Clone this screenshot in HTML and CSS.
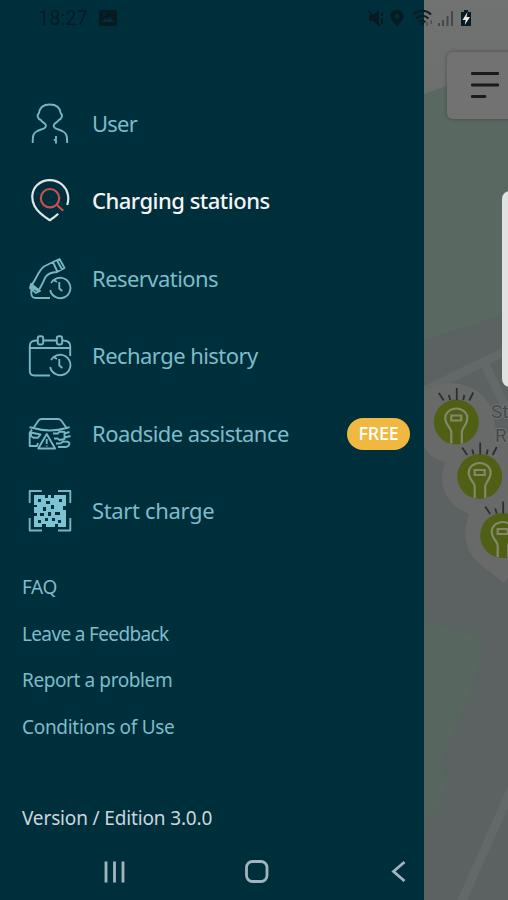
FILE: index.html
```html
<!DOCTYPE html>
<html lang="en">
<head>
    <meta charset="UTF-8">
    <title>Charging stations</title>
    <link rel="stylesheet" href="styles.css">
</head>
<body>
    <div class="screen">
        <div class="drawer">
            <nav class="menu">
                <a class="menu-item user">
                    <svg class="icon" viewBox="0 0 44 44">
                        <path d="M4.700 41c0-7 .3-10 4.600-12l6.700-2.700c2.500-1.200 2.500-3.300.5-5C14.500 20 13.500 19.500 12.800 18c-2.500-.5-4.500-5-2-6.500C11.500 5.500 15.500 2.500 21.800 2.500s10.300 3 11 9c2.500 1.500.5 6-2 6.500-.7 1.500-1.700 2-3.700 3.300-2 1.700-2 3.800.5 5l6.700 2.700c4.300 2 4.900 5 4.900 12"/>
                        <path d="M28 34v3l-1.500 1H28v3.500"/>
                    </svg>
                    <span>User</span>
                </a>
                <a class="menu-item stations active">
                    <svg class="icon" viewBox="0 0 44 44">
                        <path d="M39.200 26C41.500 19 40 11 34.500 6 27-.7 16-.5 9.200 6 3.500 11.500 3 20 6.500 27c3 5.700 8.500 10 15.300 14.200 3.500-2.200 6-4.200 8.400-6.500"/>
                        <g class="accent"><circle cx="22" cy="19.200" r="9.200"/><path d="M28.800 25.700l6.400 6"/></g>
                    </svg>
                    <span>Charging stations</span>
                </a>
                <a class="menu-item reservations">
                    <svg class="icon" viewBox="0 0 44 44">
                        <path d="M3.500 28C8 23 10 14 16 9.500L25 5l6.500-3 5 9-7.500 4c-5 .5-9 1-11.500 5-2 4-4 9-6.500 12.500M25 5l4.500 10M29 3.500l5 9"/>
                        <path d="M3 27l9 7-4 2-6-5zM5 27.500v6M2 29l8 5M3.500 33c-1 5 .5 8 4 8H22"/>
                        <path d="M25.500 23.300a10.200 10.200 0 1 1-3.300 9.700M23 26l2.500-3 3.500 2M31.300 25v6.500l3 2.500"/>
                    </svg>
                    <span>Reservations</span>
                </a>
                <a class="menu-item history">
                    <svg class="icon" viewBox="0 0 44 44">
                        <path d="M9.500 6.500C4 6.500 1.800 8 1.800 12v25c0 3 1.700 4.500 4.500 4.500H22M15.500 6.500h13M34.500 6.500c5.500 0 7.700 1.500 7.700 5.500v10M2 14h40"/>
                        <rect x="9.800" y="2.300" width="5.400" height="8.200" rx="2"/>
                        <rect x="28.800" y="2.300" width="5.400" height="8.200" rx="2"/>
                        <path d="M25.500 23.300a10.200 10.200 0 1 1-3.300 9.700M23 26l2.500-3 3.500 2M31.300 25v6.500l3 2.500"/>
                    </svg>
                    <span>Recharge history</span>
                </a>
                <a class="menu-item roadside">
                    <svg class="icon" viewBox="0 0 44 44">
                        <path d="M5.500 16l5-7.500c.8-1.200 2-1.500 3.500-1.500h15.500c1.800 0 3 .5 3.800 1.500L38.500 16c-10 3-23 3-33 0zM5.500 16l-4-.8M38.500 16l3.200-.8M4 17.500l-2.300 3.300V34H9l1-3"/>
                        <path d="M3 20.500l9.500 2-2.500 3.300H5.500L3 24zM18.700 22l-8.400 14.500h16.800zM18.700 27v5M18.700 33.500v1"/>
                        <path d="M25 21.500h5l1.500-2 5 .5v7l-5 1-2-1.500H26M36.500 21.500l5-1.500M36.500 25.500l6-1.500M28 31.500h4c2 0 2-2.500 4-2l4 .3c3 1 .5 5.200-2 5.200h-8"/>
                    </svg>
                    <span>Roadside assistance</span>
                    <span class="badge">FREE</span>
                </a>
                <a class="menu-item start">
                    <svg class="icon" viewBox="0 0 44 44">
                        <path d="M1.700 14V2h12M30 2h12.300v12M42.300 29v12.500H30M14 41.500H1.700V29"/>
                        <path class="solid" fill-rule="evenodd" d="M6 6h11v3h3V6h3v3h3V6h12v11h-3v4h3v17h-8v-3h-3v3h-9v-3h-4v3H6V27h3v-3H6v-6h3v-2H6zM10 10v3h3v-3zM31 10v3h3v-3zM10 31v3h3v-3zM18 12v3h4v-3zM23 16v4h3v-4zM15 18v4h3v-4zM20 23v4h3v-4zM12 24v3h4v-3zM27 23v3h5v-3zM24 29v3h3v-3zM17 29v3h3v-3zM30 31v3h3v-3z"/>
                    </svg>
                    <span>Start charge</span>
                </a>
            </nav>
            <nav class="links">
                <a class="faq">FAQ</a>
                <a class="feedback">Leave a Feedback</a>
                <a class="report">Report a problem</a>
                <a class="conditions">Conditions of Use</a>
            </nav>
            <div class="version">Version / Edition 3.0.0</div>
            <div class="navbar">
                <svg viewBox="0 0 28 28"><path d="M6 3.500v21M14.500 3.500v21M23 3.500v21"/></svg>
                <svg viewBox="0 0 28 28"><rect x="3.500" y="3.500" width="20.500" height="20" rx="6"/></svg>
                <svg viewBox="0 0 28 28"><path d="M19.500 4L8.500 13.500l11 9.500"/></svg>
            </div>
        </div>
        <div class="map">
            <svg class="map-art" viewBox="0 0 84 900">
                <defs>
                    <g id="station">
                        <circle class="station-dot" r="22.500"/>
                        <path class="station-bulb" d="M-5 21.500V10c0-4-6-7-6-14a11 9.500 0 0 1 22 0C11 3 5.500 6 5.500 10v11.500M-5-6.500H5v5H-5z"/>
                        <path class="station-rays" d="M-17.500-29l5 7.500M-7.500-27l1.500 5M.5-34v12M8-27l-1 5M17-29.500l-4 8"/>
                    </g>
                </defs>
                <path class="park" d="M0 94l84-30v249L0 340z"/>
                <path class="road" d="M-4 393l88-43M60 362l24 50"/>
                <path class="park low" d="M0 620l60 20-10 43-33 80 8 17-13 33-12 10z"/>
                <path class="road" d="M88 788L36 905"/>
                <path class="halo" d="M0 392c20-16 54-10 66 14 4 8 5 17 4 25 25-2 30 18 30 30v100L80 583 58 566c-12-9-19-23-16-40l3-12c-16-6-26-18-27-34 0-8 1-12 3-18C11 459 4 455 0 447z"/>
                <g class="place"><text x="67" y="418">St</text><text x="71" y="442">R</text></g>
                <use href="#station" x="32.300" y="422"/>
                <use href="#station" x="55.700" y="476.500"/>
                <use href="#station" x="78.700" y="535.500"/>
            </svg>
            <div class="filter">
                <svg viewBox="0 0 28 28"><path d="M1 2.500h26M1 14h26M1 25.500h13"/></svg>
            </div>
            <div class="side-panel"></div>
        </div>
        <div class="statusbar">
            <span class="clock">18:27</span>
            <svg class="picture" viewBox="0 0 18 16"><path fill-rule="evenodd" d="M2 0h14a2 2 0 0 1 2 2v12a2 2 0 0 1-2 2H2a2 2 0 0 1-2-2V2a2 2 0 0 1 2-2zM3 12h12l-4-5-3 3-2-2zM4 3v2h2V3z"/></svg>
            <svg class="tray" viewBox="0 0 106 20">
                <path d="M1 7h4l6-5v16l-6-5H1zM1 2l12 15-1 1L0 3z"/>
                <path d="M13 5h2v3h-2zM13 10h2v6h-2z"/>
                <path fill-rule="evenodd" d="M29 2c4 0 6.500 2.700 6.500 6 0 4-6.500 10-6.500 10s-6.500-6-6.500-10c0-3.300 2.500-6 6.500-6zm0 4a2.300 2.300 0 1 0 0 4.600A2.300 2.300 0 0 0 29 6z"/>
                <path class="wave" d="M45.500 6.500c5-5 12.500-5 17.500 0M48 10.500c4-3.500 8.500-3.500 12.500 0M51 14c2.500-2 4-2 6.500 0"/>
                <path d="M52 15h4.500l-2.200 3z"/>
                <path class="faint" d="M58.500 14H60v4h-1.500zM62.500 12H64v4h-1.500z"/>
                <path class="bars" d="M71 18v-3M75 18v-6M79.500 18V8M84 18V3"/>
                <path d="M93 4h3V2h4v2h3v14H93z"/>
                <path class="bolt" d="M99.500 4l-5 8h3.200l-1 5 5.300-8h-3.500z"/>
            </svg>
        </div>
    </div>
</body>
</html>
```
FILE: styles.css
```css
body { margin: 0; font-family: "Noto Sans", "Open Sans", sans-serif; background-color: #5c6161; }
.screen { position: relative; display: flex; width: 508px; height: 900px; overflow: hidden; }

/* drawer */
.drawer { display: flex; flex-direction: column; width: 424px; height: 900px; box-sizing: border-box; padding-top: 85px; background-color: #002f3c; }
.menu { display: flex; flex-direction: column; }
.menu-item { display: flex; align-items: center; height: 77.5px; padding: 0 14px 0 28px; color: #7dbccb; font-size: 22px; letter-spacing: -0.55px; white-space: nowrap; }
.menu-item span { padding-bottom: 2px; }
.user { letter-spacing: -0.8px; }
.start { letter-spacing: -0.35px; }
.icon { width: 44px; height: 44px; margin-right: 20px; fill: none; stroke: #75b5c4; stroke-width: 1.9; stroke-linejoin: round; }
.icon .solid { fill: #7cc4d3; stroke: none; }
.active { color: #f4f4f4; font-weight: 500; letter-spacing: -0.5px; }
.active .icon { stroke: #dfe5e8; stroke-width: 2.2; }
.active .accent { stroke: #c94e4e; }
.menu-item .badge { margin-left: auto; padding: 0; width: 63px; height: 32px; border-radius: 16px; background-color: #f0b840; color: #fff; font-size: 18px; font-weight: 500; line-height: 30px; text-align: center; letter-spacing: -0.2px; }
.links { display: flex; flex-direction: column; margin-top: 14px; padding-left: 22px; }
.links a { height: 46.5px; line-height: 46.5px; color: #7dbccb; font-size: 19px; letter-spacing: -0.4px; white-space: nowrap; }
.links .feedback { letter-spacing: -0.65px; }
.links .conditions { letter-spacing: -0.3px; }
.version { margin-top: 48px; padding-left: 22px; height: 40px; line-height: 40px; color: #cbd6dc; font-size: 19px; letter-spacing: -0.15px; }
.navbar { display: flex; justify-content: space-between; margin-top: auto; padding: 0 11px 14px 100px; }
.navbar svg { width: 28px; height: 28px; fill: none; stroke: #a3b4bf; stroke-width: 2.8; }

/* map */
.map { position: relative; width: 84px; height: 900px; background: linear-gradient(#717272 0, #6d6e6e 100px, #5c6161 101px); }
.map-art { display: block; width: 84px; height: 900px; }
.park { fill: #596961; }
.low { fill: #57665f; }
.road { fill: none; stroke: #636869; stroke-width: 9; }
.halo { fill: #676a69; }
.place { fill: #45494b; font-family: Roboto, sans-serif; font-size: 19px; stroke: #707474; stroke-width: 2; paint-order: stroke; }
.station-dot { fill: #4f5f14; }
.station-bulb { fill: none; stroke: #83886b; stroke-width: 2.2; }
.station-rays { fill: none; stroke: #2a2f31; stroke-width: 1.8; }
.filter { position: absolute; left: 23px; top: 52px; width: 75px; height: 67px; border-radius: 6px; background-color: #727272; box-shadow: 0 0 4px rgba(0,0,0,0.3); }
.filter svg { display: block; width: 28px; height: 28px; margin: 19px 0 0 24px; fill: none; stroke: #181b1c; stroke-width: 2.8; stroke-linecap: round; }
.side-panel { position: absolute; left: 78px; top: 191px; width: 20px; height: 196px; border-radius: 8px; background-color: #dfe2e1; }

/* status bar */
.statusbar { position: absolute; left: 0; top: 0; display: flex; align-items: center; width: 508px; height: 36px; box-sizing: border-box; padding: 0 34px 0 38px; color: #041c26; }
.statusbar svg { fill: #061a22; }
.clock { font-family: Roboto, sans-serif; font-size: 20px; }
.picture { width: 18px; height: 16px; margin-left: 11px; }
.tray { width: 106px; height: 20px; margin-left: auto; }
.statusbar .wave { fill: none; stroke: #10191d; stroke-width: 1.8; }
.statusbar .bars { fill: none; stroke: #45484a; stroke-width: 2; }
.statusbar .faint { fill: #4c5050; }
.statusbar .bolt { fill: #e8eaea; }
```
